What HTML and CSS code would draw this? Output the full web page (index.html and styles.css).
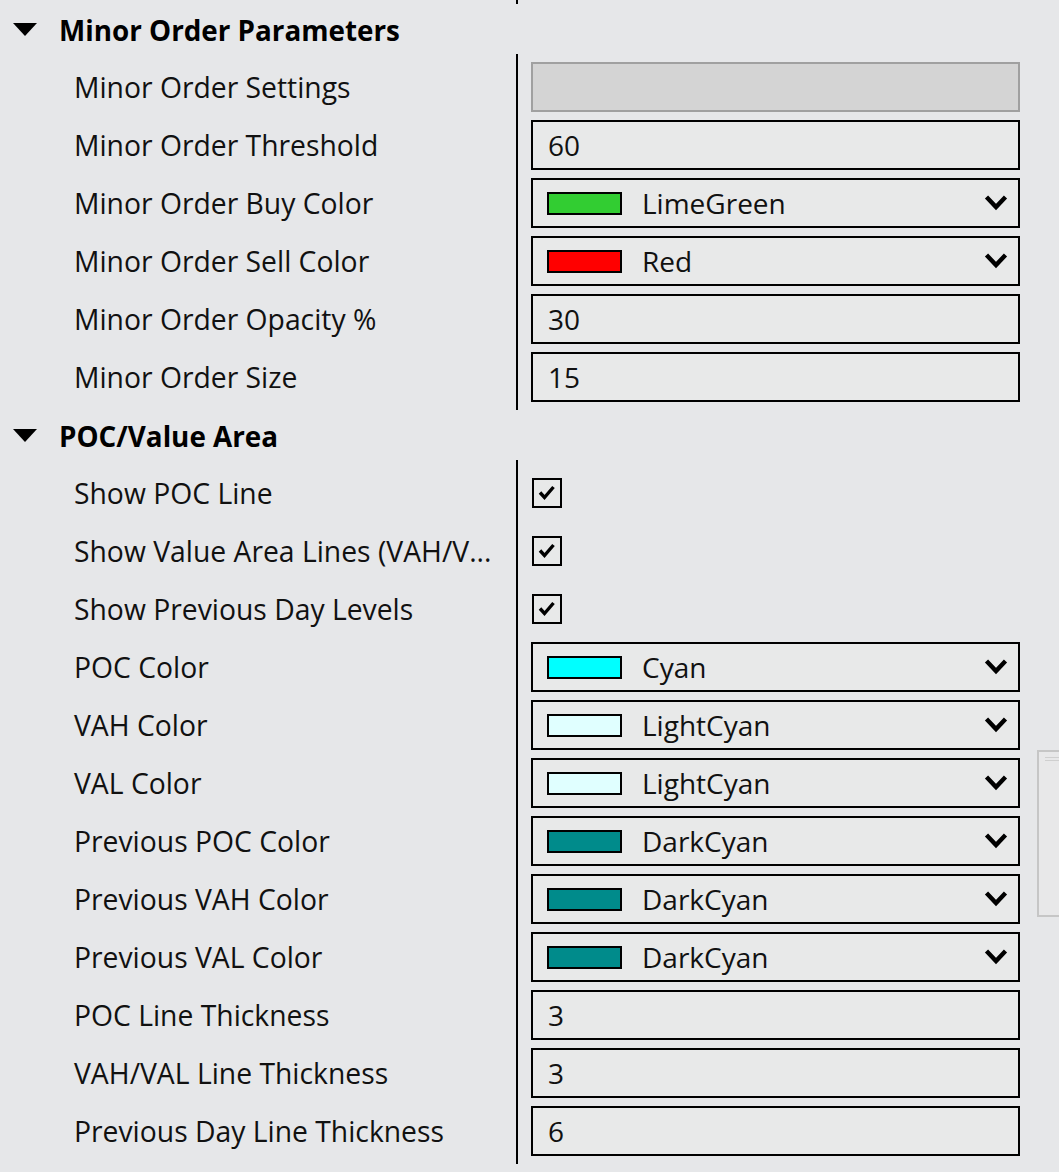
FILE: index.html
```html
<!DOCTYPE html>
<html>
<head>
<meta charset="utf-8">
<link rel="stylesheet" href="styles.css">
</head>
<body>
<div class="page">
  <div class="tail"><div class="tail-line"></div></div>

  <div class="section">
    <div class="header">
      <span class="tri"></span>
      <span class="title">Minor Order Parameters</span>
    </div>
    <div class="body">
      <div class="labels">
        <div class="label">Minor Order Settings</div>
        <div class="label">Minor Order Threshold</div>
        <div class="label">Minor Order Buy Color</div>
        <div class="label">Minor Order Sell Color</div>
        <div class="label">Minor Order Opacity %</div>
        <div class="label">Minor Order Size</div>
      </div>
      <div class="values">
        <div class="cell"><div class="box disabled"></div></div>
        <div class="cell"><div class="box"><span class="val">60</span></div></div>
        <div class="cell"><div class="box color"><span class="swatch" style="background:#32CD32"></span><span class="cname">LimeGreen</span><svg class="chev" viewBox="0 0 24 18"><path d="M2.5 3 L12 13 L21.5 3" fill="none" stroke="#000" stroke-width="4.4"/></svg></div></div>
        <div class="cell"><div class="box color"><span class="swatch" style="background:#FF0000"></span><span class="cname">Red</span><svg class="chev" viewBox="0 0 24 18"><path d="M2.5 3 L12 13 L21.5 3" fill="none" stroke="#000" stroke-width="4.4"/></svg></div></div>
        <div class="cell"><div class="box"><span class="val">30</span></div></div>
        <div class="cell"><div class="box"><span class="val">15</span></div></div>
      </div>
    </div>
  </div>

  <div class="section">
    <div class="header">
      <span class="tri"></span>
      <span class="title">POC/Value Area</span>
    </div>
    <div class="body">
      <div class="labels">
        <div class="label">Show POC Line</div>
        <div class="label">Show Value Area Lines (VAH/V...</div>
        <div class="label">Show Previous Day Levels</div>
        <div class="label">POC Color</div>
        <div class="label">VAH Color</div>
        <div class="label">VAL Color</div>
        <div class="label">Previous POC Color</div>
        <div class="label">Previous VAH Color</div>
        <div class="label">Previous VAL Color</div>
        <div class="label">POC Line Thickness</div>
        <div class="label">VAH/VAL Line Thickness</div>
        <div class="label">Previous Day Line Thickness</div>
      </div>
      <div class="values">
        <div class="cell"><div class="check"><svg viewBox="0 0 26 26"><path d="M6 12.5 L10.5 17.5 L19.5 7" fill="none" stroke="#000" stroke-width="3.4"/></svg></div></div>
        <div class="cell"><div class="check"><svg viewBox="0 0 26 26"><path d="M6 12.5 L10.5 17.5 L19.5 7" fill="none" stroke="#000" stroke-width="3.4"/></svg></div></div>
        <div class="cell"><div class="check"><svg viewBox="0 0 26 26"><path d="M6 12.5 L10.5 17.5 L19.5 7" fill="none" stroke="#000" stroke-width="3.4"/></svg></div></div>
        <div class="cell"><div class="box color"><span class="swatch" style="background:#00FFFF"></span><span class="cname">Cyan</span><svg class="chev" viewBox="0 0 24 18"><path d="M2.5 3 L12 13 L21.5 3" fill="none" stroke="#000" stroke-width="4.4"/></svg></div></div>
        <div class="cell"><div class="box color"><span class="swatch" style="background:#E0FFFF"></span><span class="cname">LightCyan</span><svg class="chev" viewBox="0 0 24 18"><path d="M2.5 3 L12 13 L21.5 3" fill="none" stroke="#000" stroke-width="4.4"/></svg></div></div>
        <div class="cell"><div class="box color"><span class="swatch" style="background:#E0FFFF"></span><span class="cname">LightCyan</span><svg class="chev" viewBox="0 0 24 18"><path d="M2.5 3 L12 13 L21.5 3" fill="none" stroke="#000" stroke-width="4.4"/></svg></div></div>
        <div class="cell"><div class="box color"><span class="swatch" style="background:#008B8B"></span><span class="cname">DarkCyan</span><svg class="chev" viewBox="0 0 24 18"><path d="M2.5 3 L12 13 L21.5 3" fill="none" stroke="#000" stroke-width="4.4"/></svg></div></div>
        <div class="cell"><div class="box color"><span class="swatch" style="background:#008B8B"></span><span class="cname">DarkCyan</span><svg class="chev" viewBox="0 0 24 18"><path d="M2.5 3 L12 13 L21.5 3" fill="none" stroke="#000" stroke-width="4.4"/></svg></div></div>
        <div class="cell"><div class="box color"><span class="swatch" style="background:#008B8B"></span><span class="cname">DarkCyan</span><svg class="chev" viewBox="0 0 24 18"><path d="M2.5 3 L12 13 L21.5 3" fill="none" stroke="#000" stroke-width="4.4"/></svg></div></div>
        <div class="cell"><div class="box"><span class="val">3</span></div></div>
        <div class="cell"><div class="box"><span class="val">3</span></div></div>
        <div class="cell"><div class="box"><span class="val">6</span></div></div>
      </div>
    </div>
  </div>

  <div class="scrollstub"><div class="grip"></div></div>
</div>
</body>
</html>
```

FILE: styles.css
```css
html, body {
  margin: 0;
  padding: 0;
  background: #e6e7e9;
}
body {
  font-family: "Open Sans", "Noto Sans", sans-serif;
  color: #111;
  width: 1059px;
  height: 1172px;
  overflow: hidden;
}
.page {
  position: relative;
  width: 1059px;
  height: 1172px;
}
.tail {
  height: 4px;
  display: flex;
}
.tail-line {
  margin-left: 516px;
  width: 2px;
  background: #000;
}
.header {
  height: 50px;
  display: flex;
  align-items: center;
}
.tri {
  width: 0;
  height: 0;
  margin-left: 13px;
  border-left: 12px solid transparent;
  border-right: 12px solid transparent;
  border-top: 13px solid #000;
  margin-top: 1px;
}
.title {
  margin-left: 22px;
  font-weight: 700;
  font-size: 27.8px;
  color: #000;
  margin-top: 2px;
  white-space: nowrap;
}
.body {
  display: flex;
}
.labels {
  width: 516px;
  padding: 4px 0;
}
.label {
  height: 58px;
  display: flex;
  align-items: center;
  padding-left: 74px;
  font-size: 28.3px;
  white-space: nowrap;
}
.values {
  border-left: 2px solid #000;
  padding: 4px 0 4px 13px;
}
.cell {
  height: 58px;
  display: flex;
  align-items: center;
}
.box {
  box-sizing: border-box;
  width: 489px;
  height: 50px;
  border: 2px solid #000;
  background: #e8e9e9;
  display: flex;
  align-items: center;
  font-size: 28px;
}
.box.disabled {
  background: #d4d4d4;
  border-color: #a0a0a0;
}
.val {
  padding-left: 15px;
}
.swatch {
  box-sizing: border-box;
  width: 75px;
  height: 23px;
  border: 2px solid #000;
  margin-left: 14px;
  flex: none;
}
.cname {
  margin-left: 20px;
  flex: 1;
}
.chev {
  width: 24px;
  height: 18px;
  margin-right: 10px;
  flex: none;
}
.check {
  box-sizing: border-box;
  width: 30px;
  height: 30px;
  border: 2px solid #000;
  background: #e8e9e9;
  margin-left: 1px;
}
.check svg {
  display: block;
  width: 26px;
  height: 26px;
}
.scrollstub {
  position: absolute;
  left: 1037px;
  top: 750px;
  width: 40px;
  height: 167px;
  box-sizing: border-box;
  border: 2px solid #c6c6c6;
  background: #e8e8e9;
}
.grip {
  margin: 5px 0 0 6px;
  height: 2px;
  border-top: 1px solid #cfcfcf;
  border-bottom: 1px solid #cfcfcf;
}
```
